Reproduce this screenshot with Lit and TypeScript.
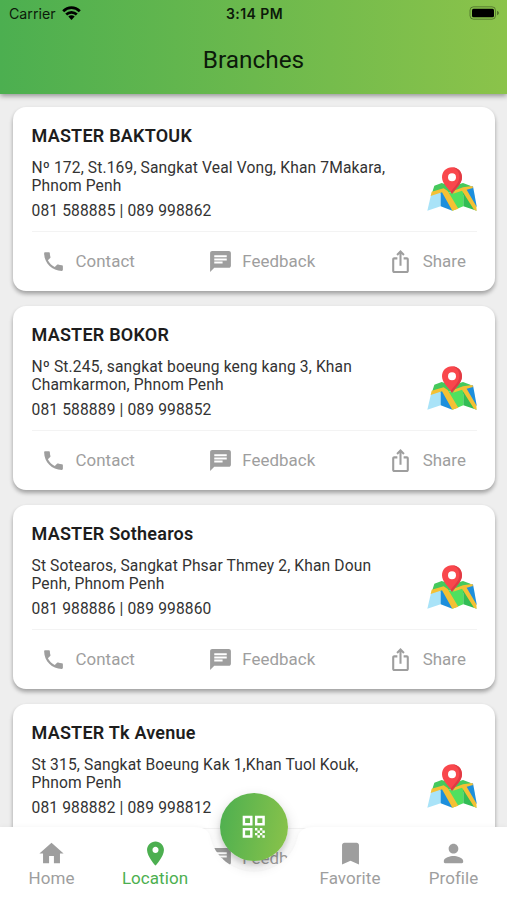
import { LitElement, html, css, svg } from "lit";
import { customElement, property } from "lit/decorators.js";

interface Branch {
  name: string;
  address: string[];
  phones: string;
}

const BRANCHES: Branch[] = [
  {
    name: "MASTER BAKTOUK",
    address: ["Nº 172, St.169, Sangkat Veal Vong, Khan 7Makara,", "Phnom Penh"],
    phones: "081 588885 | 089 998862",
  },
  {
    name: "MASTER BOKOR",
    address: ["Nº St.245, sangkat boeung keng kang 3, Khan", "Chamkarmon, Phnom Penh"],
    phones: "081 588889 | 089 998852",
  },
  {
    name: "MASTER Sothearos",
    address: ["St Sotearos, Sangkat Phsar Thmey 2, Khan Doun", "Penh, Phnom Penh"],
    phones: "081 988886 | 089 998860",
  },
  {
    name: "MASTER Tk Avenue",
    address: ["St 315, Sangkat Boeung Kak 1,Khan Tuol Kouk,", "Phnom Penh"],
    phones: "081 988882 | 089 998812",
  },
];

const ICONS: Record<string, string> = {
  call: "M6.62 10.79c1.44 2.83 3.76 5.14 6.59 6.59l2.2-2.2c.27-.27.67-.36 1.02-.24 1.12.37 2.33.57 3.57.57.55 0 1 .45 1 1V20c0 .55-.45 1-1 1-9.39 0-17-7.61-17-17 0-.55.45-1 1-1h3.5c.55 0 1 .45 1 1 0 1.25.2 2.45.57 3.57.11.35.03.74-.25 1.02l-2.2 2.2z",
  chat: "M20 2H4c-1.1 0-1.99.9-1.99 2L2 22l4-4h14c1.1 0 2-.9 2-2V4c0-1.1-.9-2-2-2zM6 9h12v2H6V9zm8 5H6v-2h8v2zm4-6H6V6h12v2z",
  share: "M16 5l-1.42 1.42-1.59-1.59V16h-1.98V4.83L9.42 6.42 8 5l4-4 4 4zm4 5v11c0 1.1-.9 2-2 2H6c-1.11 0-2-.9-2-2V10c0-1.11.89-2 2-2h3v2H6v11h12V10h-3V8h3c1.1 0 2 .89 2 2z",
  home: "M10 20v-6h4v6h5v-8h3L12 3 2 12h3v8z",
  place: "M12 2C8.13 2 5 5.13 5 9c0 5.25 7 13 7 13s7-7.75 7-13c0-3.87-3.13-7-7-7zm0 9.5c-1.38 0-2.5-1.12-2.5-2.5s1.12-2.5 2.5-2.5 2.5 1.12 2.5 2.5-1.12 2.5-2.5 2.5z",
  bookmark: "M17 3H7c-1.1 0-1.99.9-1.99 2L5 21l7-3 7 3V5c0-1.1-.9-2-2-2z",
  person: "M12 12c2.21 0 4-1.79 4-4s-1.79-4-4-4-4 1.79-4 4 1.79 4 4 4zm0 2c-2.67 0-8 1.34-8 4v1c0 .55.45 1 1 1h14c.55 0 1-.45 1-1v-1c0-2.66-5.33-4-8-4z",
  qr: "M3 11h8V3H3v8zm2-6h4v4H5V5zM3 21h8v-8H3v8zm2-6h4v4H5v-4zM13 3v8h8V3h-8zm6 6h-4V5h4v4zM19 19h2v2h-2zM13 13h2v2h-2zM15 15h2v2h-2zM13 17h2v2h-2zM15 19h2v2h-2zM17 17h2v2h-2zM17 13h2v2h-2zM19 15h2v2h-2z",
};

@customElement("ui-icon")
class UiIcon extends LitElement {
  @property() name = "";

  static styles = css`
    :host { display: block; width: 25px; height: 25px; }
    .glyph { display: block; width: 100%; height: 100%; fill: currentColor; }
  `;

  render() {
    return html`<svg class="glyph" viewBox="0 0 24 24">${svg`<path d=${ICONS[this.name]} />`}</svg>`;
  }
}

@customElement("map-picture")
class MapPicture extends LitElement {
  static styles = css`
    :host { display: block; width: 50px; height: 44px; }
    .map { display: block; width: 100%; height: 100%; }
  `;

  render() {
    return html`
      <svg class="map" viewBox="0 0 150 132">
        <path fill="#45c95c" d="M22 56L44 48 76 58 108 48 130 56 137 72 112 84 76 76 40 80 14 82z" />
        <path fill="#a9e3f8" d="M12 84L41 75V118L1 131z" />
        <path fill="#1d8fdc" d="M41 75L76 84V131L41 118z" />
        <path fill="#4fe05f" d="M58 78L76 76 109 66V118L76 131z" />
        <path fill="#32bd55" d="M109 70L149 131 109 118z" />
        <path fill="#1d8fdc" d="M110 64L138 58 149 118 145 122z" />
        <path fill="#f4c034" d="M14 74L50 64 62 72 94 125 76 131 45 76 11 87z" />
        <path fill="#f4c034" d="M84 70L108 61 136 57 138 63 119 68 148 118 149 131 141 128 105 71 78 80z" />
        <path fill="#f9474c" d="M75 1C58 1 45 14 45 31c0 19 18 33 30 49 12-16 30-30 30-49C105 14 92 1 75 1z" />
        <path fill="#e13a43" d="M75 1C92 1 105 14 105 31c0 19-18 33-30 49l-4-5C82 59 97 48 97 30 97 14 88 4 75 1z" />
        <circle fill="#fff" cx="75" cy="31" r="12" />
      </svg>
    `;
  }
}

@customElement("branch-card")
class BranchCard extends LitElement {
  @property({ attribute: false }) branch!: Branch;

  static styles = css`
    :host {
      display: flex;
      flex-direction: column;
      flex: none;
      box-sizing: border-box;
      height: 184px;
      padding: 0 18px 0 18.5px;
      border-radius: 13px;
      background: #fff;
      box-shadow: 0 3px 4px rgba(0, 0, 0, 0.27), 0 2px 4px rgba(0, 0, 0, 0.08);
      white-space: nowrap;
    }
    .info { display: flex; height: 124px; border-bottom: 1px solid #f3f3f3; }
    .text { flex: 1; }
    .name { margin-top: 17.5px; font-size: 18px; line-height: 24px; font-weight: 600; color: #1d1d1d; letter-spacing: 0.23px; }
    .address { margin-top: 11px; font-size: 15.6px; line-height: 18.4px; color: #333; letter-spacing: 0.13px; }
    .phones { margin-top: 5px; font-size: 15.6px; line-height: 20px; color: #333; letter-spacing: 0.13px; }
    .map { margin-top: 60px; }
    .actions {
      flex: 1;
      display: flex;
      align-items: center;
      justify-content: space-between;
      padding: 0 11px 1px 9.5px;
      color: #9e9e9e;
    }
    .action { display: flex; align-items: center; gap: 9.5px; font-size: 16.9px; letter-spacing: 0.05px; }
    .action-icon { margin-top: 2px; }
  `;

  render() {
    const { name, address, phones } = this.branch;
    const actions = [["call", "Contact"], ["chat", "Feedback"], ["share", "Share"]];
    return html`
      <div class="info">
        <div class="text">
          <div class="name">${name}</div>
          <div class="address">${address.map((line) => html`<div>${line}</div>`)}</div>
          <div class="phones">${phones}</div>
        </div>
        <map-picture class="map"></map-picture>
      </div>
      <div class="actions">
        ${actions.map(([icon, label]) => html`<div class="action"><ui-icon class="action-icon" name=${icon}></ui-icon><span>${label}</span></div>`)}
      </div>
    `;
  }
}

@customElement("app-root")
class AppRoot extends LitElement {
  static styles = css`
    :host {
      display: flex;
      flex-direction: column;
      position: relative;
      height: 900px;
      overflow: hidden;
      background: #eee;
      font-family: Roboto, "Liberation Sans", sans-serif;
    }
    .header {
      flex: none;
      height: 94px;
      background: linear-gradient(to right, #4caf50, #8bc34a);
      box-shadow: 0 2px 5px rgba(0, 0, 0, 0.38);
      color: #0c1a0a;
      z-index: 1;
    }
    .status {
      display: grid;
      grid-template-columns: 1fr auto 1fr;
      align-items: center;
      height: 27px;
      padding: 0 7px 0 9px;
      font: 14.2px/27px Inter, sans-serif;
    }
    .carrier { display: flex; align-items: center; gap: 6px; }
    .wifi { display: block; width: 19px; height: 14px; margin-top: -2px; }
    .time { font-weight: 600; font-size: 14px; letter-spacing: 0.45px; }
    .battery { display: block; justify-self: end; width: 31px; height: 14px; margin-top: -1px; }
    .title { margin-top: 17px; text-align: center; font-size: 24.4px; line-height: 32px; }
    .list { flex: 1; min-height: 0; display: flex; flex-direction: column; gap: 15px; padding: 12.5px 12px 0 13px; }
    .dock { position: absolute; left: 0; right: 0; bottom: 0; height: 73px; }
    .bar { position: absolute; inset: 0; width: 507px; height: 73px; overflow: visible; filter: drop-shadow(0 0 2px rgba(0, 0, 0, 0.05)); }
    .tabs {
      position: relative;
      display: grid;
      grid-template-columns: 103px 104px 91px 104px 103px;
      padding-top: 12px;
    }
    .tab { display: flex; flex-direction: column; align-items: center; color: #9e9e9e; font-size: 17px; line-height: 24px; letter-spacing: 0.05px; }
    .tab.active { color: #4caf50; }
    .tab-icon { width: 29px; height: 29px; margin-bottom: -2px; }
    .fab {
      position: absolute;
      left: 220px;
      top: -34px;
      width: 68px;
      height: 68px;
      border-radius: 50%;
      display: grid;
      place-items: center;
      color: #fff;
      background: linear-gradient(100deg, #4caf50, #8bc34a);
      box-shadow: 0 5px 14px rgba(0, 0, 0, 0.16), 0 4px 5px rgba(0, 0, 0, 0.1);
    }
    .fab-icon { width: 29.5px; height: 29.5px; }
  `;

  private tab(icon: string, label: string, active = false) {
    return html`<div class="tab ${active ? "active" : ""}"><ui-icon class="tab-icon" name=${icon}></ui-icon><span>${label}</span></div>`;
  }

  render() {
    return html`
      <header class="header">
        <div class="status">
          <div class="carrier">
            <span>Carrier</span>
            <svg class="wifi" viewBox="0 0 19 14" fill="none" stroke="#000" stroke-width="2.7">
              <path d="M1.2 5.2C6 .4 13 .4 17.8 5.2" />
              <path d="M4.2 8.5c3-2.9 7.6-2.9 10.6 0" />
              <path fill="#000" stroke="none" d="M6.3 10.5c1.8-1.6 4.6-1.6 6.4 0L9.5 13.9z" />
            </svg>
          </div>
          <div class="time">3:14 PM</div>
          <svg class="battery" viewBox="0 0 31 14">
            <rect x="1" y="0.8" width="25.5" height="12.4" rx="3.5" fill="none" stroke="#000" stroke-opacity=".35" />
            <rect x="3" y="2.7" width="22" height="8.6" rx="1.5" fill="#000" />
            <path d="M28 4.7v4.6c1.3-.5 1.9-1.3 1.9-2.3S29.3 5.2 28 4.7z" fill="#000" fill-opacity=".4" />
          </svg>
        </div>
        <div class="title">Branches</div>
      </header>
      <main class="list">${BRANCHES.map((b) => html`<branch-card .branch=${b}></branch-card>`)}</main>
      <nav class="dock">
        <svg class="bar" viewBox="0 0 507 73">
          <path fill="#fff" d="M0 0H193Q208 0 210 9.3A45 45 0 0 0 298 9.3Q300 0 315 0H507V73H0z" />
        </svg>
        <div class="tabs">
          ${this.tab("home", "Home")}
          ${this.tab("place", "Location", true)}
          <span></span>
          ${this.tab("bookmark", "Favorite")}
          ${this.tab("person", "Profile")}
        </div>
        <div class="fab"><ui-icon class="fab-icon" name="qr"></ui-icon></div>
      </nav>
    `;
  }
}
